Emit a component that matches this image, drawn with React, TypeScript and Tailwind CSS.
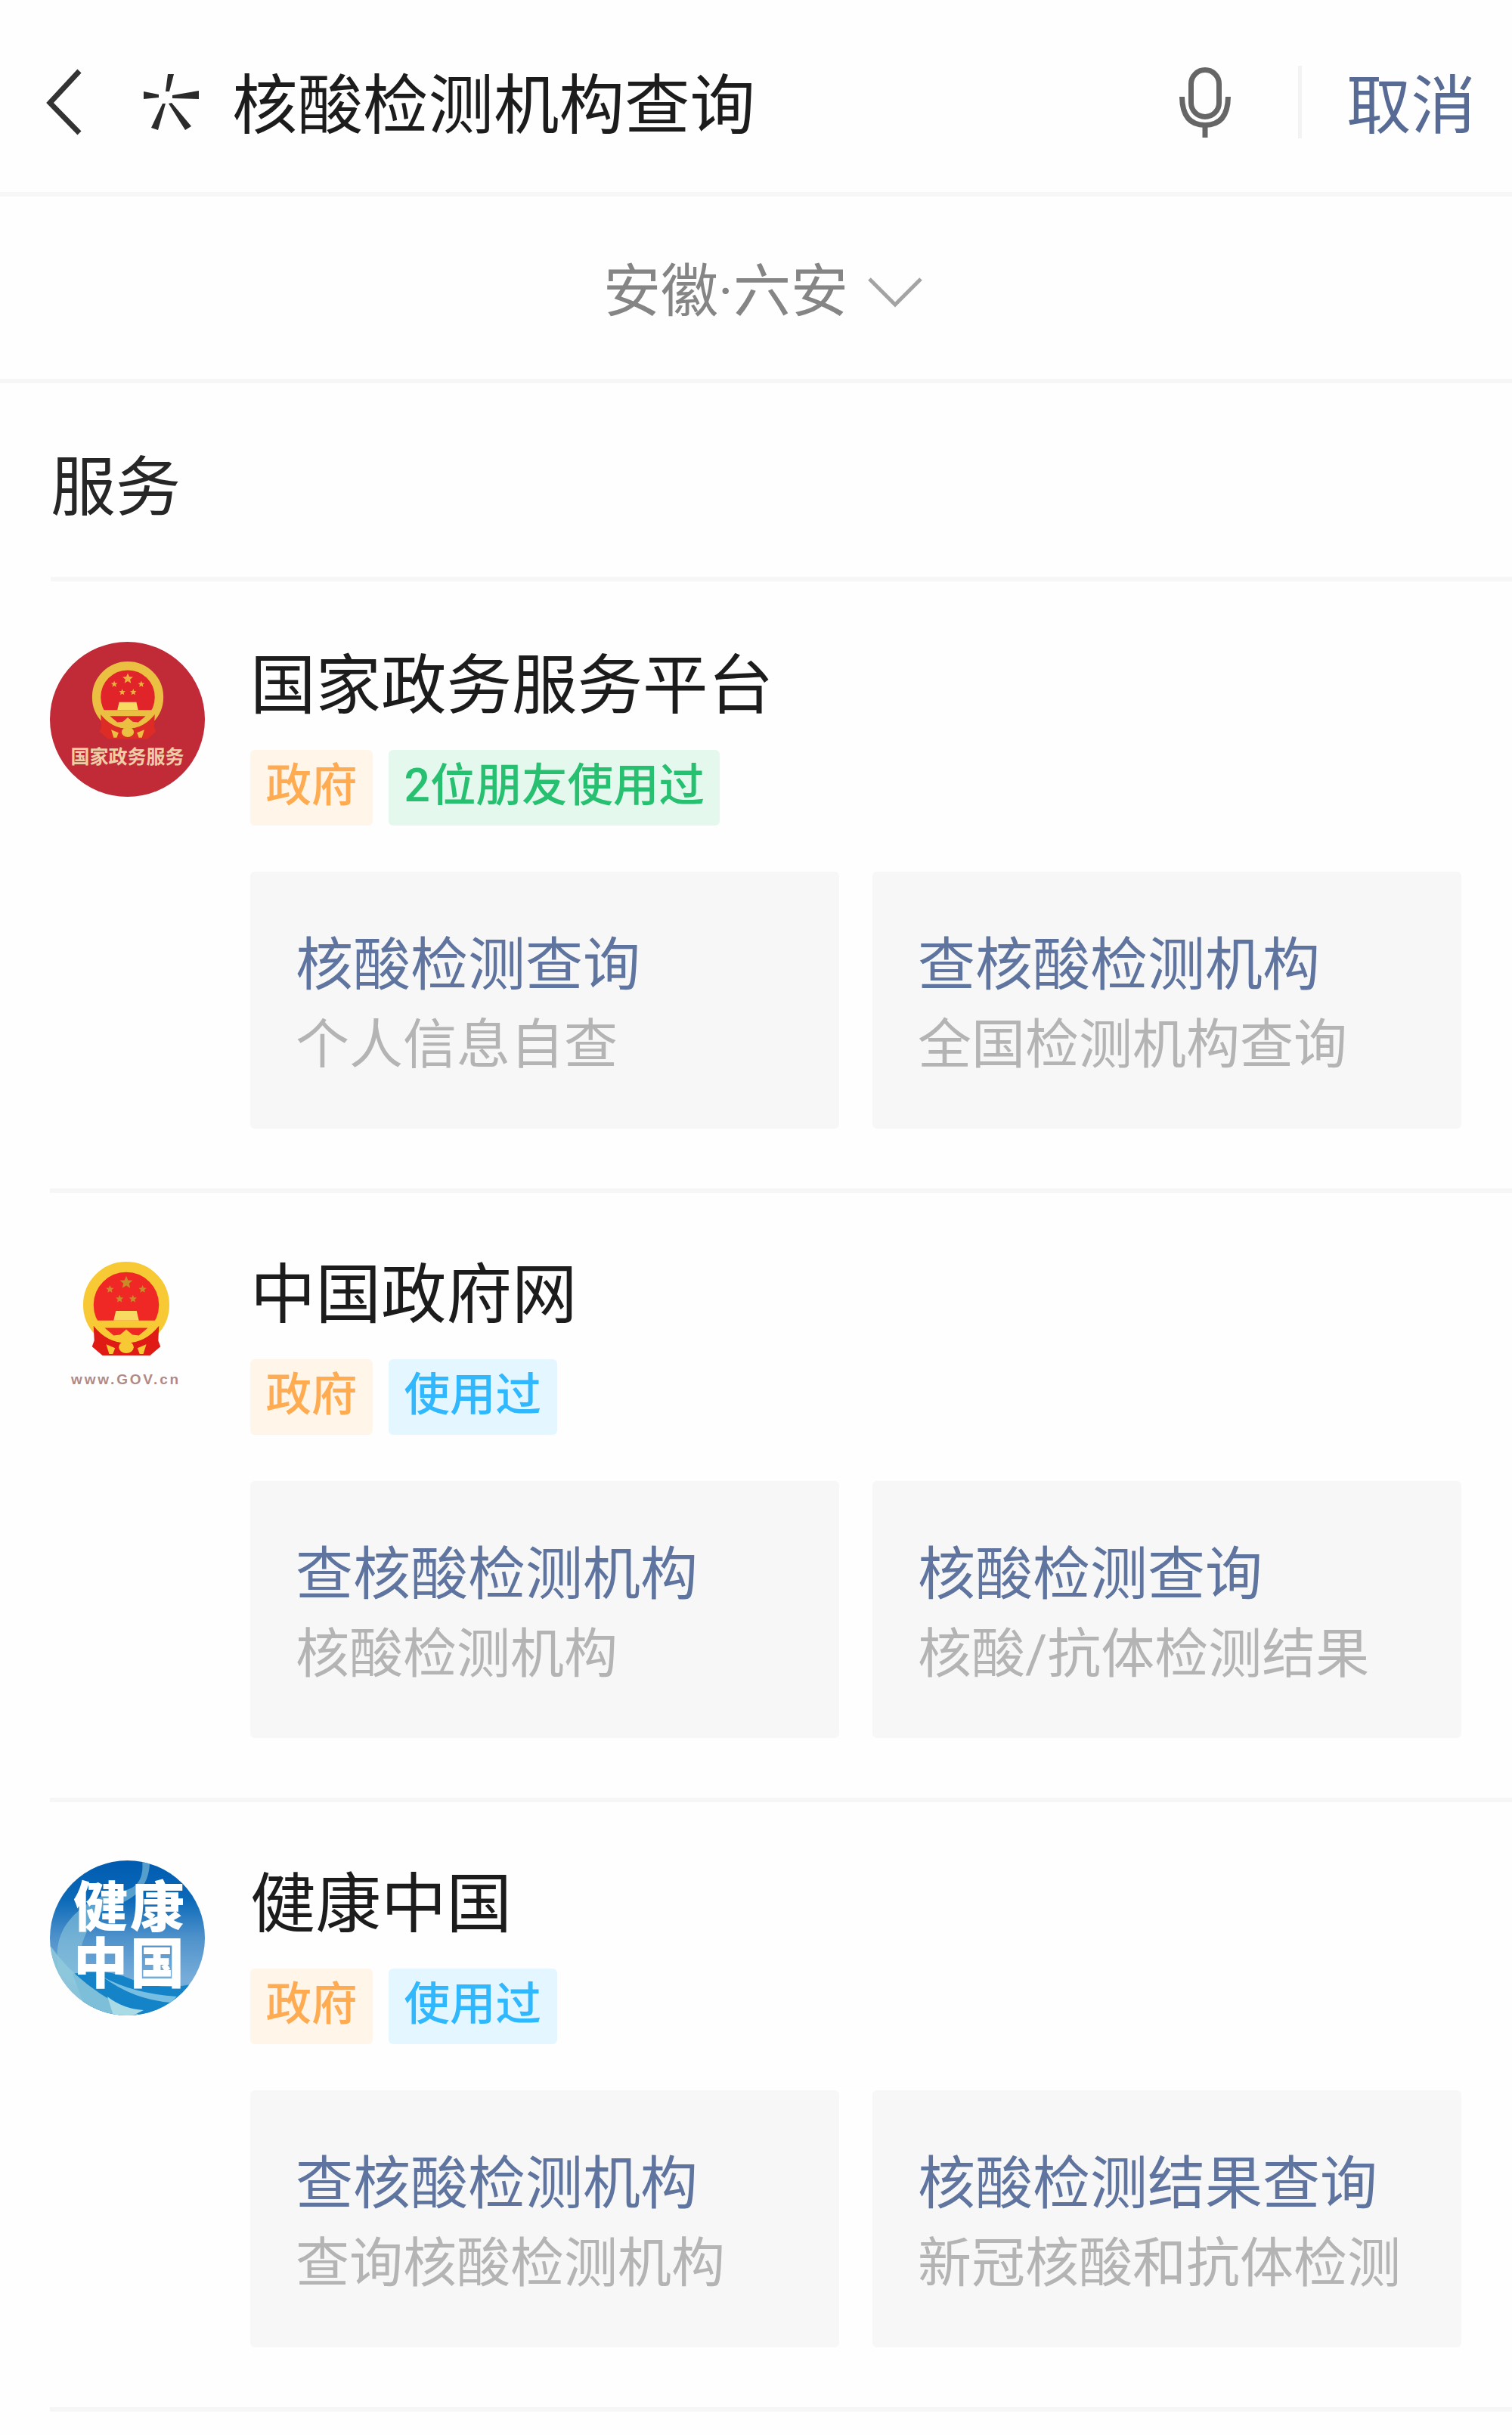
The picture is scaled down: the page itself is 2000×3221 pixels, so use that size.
import React from 'react';

type Tone = 'orange' | 'green' | 'blue';
type Tag = { label: string; tone: Tone };
type Entry = { title: string; note: string };
type Service = { name: string; logo: React.ReactNode; tags: Tag[]; entries: Entry[] };

const toneClass: Record<Tone, string> = {
  orange: 'bg-[#fff5e9] text-[#ffab52]',
  green: 'bg-[#e5f8ed] text-[#26c070]',
  blue: 'bg-[#e4f6ff] text-[#30b8ff]',
};

const star = (cx: number, cy: number, r: number) =>
  Array.from({ length: 10 }, (_, i) => {
    const a = (Math.PI / 5) * i - Math.PI / 2;
    const d = i % 2 ? r * 0.45 : r;
    return `${cx + d * Math.cos(a)},${cy + d * Math.sin(a)}`;
  }).join(' ');

/* National emblem in a 120 x 128 box */
function Emblem({ ring, field, ribbon, stars }: { ring: string; field: string; ribbon: string; stars: string }) {
  return (
    <>
      <circle cx="60" cy="58" r="51" fill={field} stroke={ring} strokeWidth="14" />
      <path d="M16 79 H104 L99 89 H21 Z" fill={ring} />
      <path d="M46 66 H74 L77 79 H43 Z" fill="#f8dc62" />
      <path d="M16 86 Q34 109 60 109 Q86 109 104 86 L103 106 L106 114 L92 126 H28 L14 114 L17 106 Z" fill={ribbon} />
      <path d="M19 87 H101 Q84 109 60 109 Q36 109 19 87 Z" fill={ring} />
      <path d="M31 89 H89 L77 99 L68 98 L60 91 L52 98 L43 99 Z" fill={field} />
      <path d="M52 98 L60 92 L68 98 L64 101 H56 Z" fill={ring} />
      <ellipse cx="60" cy="115" rx="10" ry="8" fill={ring} />
      <path d="M33 111 L45 116 L42 124 L37 124 Z M87 111 L75 116 L78 124 L83 124 Z" fill={ring} />
      <polygon points={star(60, 28, 9)} fill={stars} />
      <polygon points={star(38, 37, 5.5)} fill={stars} />
      <polygon points={star(82, 37, 5.5)} fill={stars} />
      <polygon points={star(51, 50, 5.5)} fill={stars} />
      <polygon points={star(69, 50, 5.5)} fill={stars} />
    </>
  );
}

function PlatformLogo() {
  return (
    <div className="flex h-[205px] w-[205px] flex-col items-center rounded-full bg-[#c02b37] pt-[26px]">
      <svg width="98" height="104" viewBox="0 0 120 128">
        <Emblem ring="#eabf42" field="#e0242a" ribbon="#dd2b26" stars="#ecb040" />
      </svg>
      <span className="mt-[8px] whitespace-nowrap text-[25px] font-bold leading-[30px] text-[#edcda5]">国家政务服务</span>
    </div>
  );
}

function GovLogo() {
  return (
    <div className="flex h-[205px] w-[201px] flex-col items-center pt-[14px]">
      <svg width="118" height="126" viewBox="0 0 120 128">
        <Emblem ring="#f6c935" field="#f02825" ribbon="#e01a14" stars="#c98a2a" />
      </svg>
      <span className="mt-[18px] whitespace-nowrap font-['Liberation_Sans'] text-[19px] font-bold leading-[24px] tracking-[2.8px] text-[#b08a86]">
        www.GOV.cn
      </span>
    </div>
  );
}

function HealthLogo() {
  return (
    <div className="relative h-[205px] w-[205px] overflow-hidden rounded-full">
      <svg width="205" height="205" viewBox="0 0 205 205" className="absolute inset-0">
        <defs>
          <linearGradient id="sky" x1="0" y1="0" x2="0" y2="1">
            <stop offset="0" stopColor="#005bb0" />
            <stop offset="0.25" stopColor="#0b69b8" />
            <stop offset="0.5" stopColor="#4f92cb" />
            <stop offset="0.78" stopColor="#79aeda" />
            <stop offset="1" stopColor="#3a9ed0" />
          </linearGradient>
        </defs>
        <rect width="205" height="205" fill="url(#sky)" />
        <path d="M122 0 Q126 34 98 40 Q50 46 22 84 Q4 110 12 150 L40 170 Q30 96 76 62 Q130 50 132 4 Z" fill="#8cc6dc" opacity="0.6" />
        <path d="M30 150 Q70 140 110 158 Q160 176 205 158 V205 H50 Z" fill="#1483c8" />
        <path d="M0 112 Q40 170 120 205 H40 L0 180 Z" fill="#8fc9dc" opacity="0.85" />
        <path d="M70 154 Q110 176 168 180 L160 188 Q110 184 70 154 Z" fill="#76bfe2" />
        <path d="M76 180 Q96 196 124 198 L110 205 H84 Z" fill="#a9dbe6" />
      </svg>
      <div className="relative ml-[31px] mt-[25px] w-[154px] break-all text-[72px] font-black leading-[75px] tracking-[3px] text-white">
        健康中国
      </div>
    </div>
  );
}

const services: Service[] = [
  {
    name: '国家政务服务平台',
    logo: <PlatformLogo />,
    tags: [
      { label: '政府', tone: 'orange' },
      { label: '2位朋友使用过', tone: 'green' },
    ],
    entries: [
      { title: '核酸检测查询', note: '个人信息自查' },
      { title: '查核酸检测机构', note: '全国检测机构查询' },
    ],
  },
  {
    name: '中国政府网',
    logo: <GovLogo />,
    tags: [
      { label: '政府', tone: 'orange' },
      { label: '使用过', tone: 'blue' },
    ],
    entries: [
      { title: '查核酸检测机构', note: '核酸检测机构' },
      { title: '核酸检测查询', note: '核酸/抗体检测结果' },
    ],
  },
  {
    name: '健康中国',
    logo: <HealthLogo />,
    tags: [
      { label: '政府', tone: 'orange' },
      { label: '使用过', tone: 'blue' },
    ],
    entries: [
      { title: '查核酸检测机构', note: '查询核酸检测机构' },
      { title: '核酸检测结果查询', note: '新冠核酸和抗体检测' },
    ],
  },
];

function SearchBar() {
  return (
    <header className="flex h-[260px] items-start border-b-[6px] border-[#f7f7f7] pl-[60px] pr-[48px] pt-[85px]">
      <svg className="mt-[5px] shrink-0" width="50" height="90" viewBox="0 0 50 90" fill="none" stroke="#333" strokeWidth="7">
        <path d="M45 4 L6 46 L45 86" />
      </svg>
      <svg className="ml-[78px] mt-[10px] shrink-0" width="78" height="80" viewBox="0 0 78 80" fill="#2b2b2b">
        <path d="M34 3 L42 3 L36 26 L31 26 Z" />
        <path d="M2 26 L22 30 L22 34 L2 36 Z" />
        <path d="M40 31 L75 25 L75 36 L40 35 Z" />
        <path d="M27 42 L31 42 L21 77 L12 74 Z" />
        <path d="M35 42 L39 41 L65 72 L57 77 Z" />
      </svg>
      <h1 className="ml-[41px] whitespace-nowrap text-[86.500px] leading-[112px] text-[#1c1c1c]">核酸检测机构查询</h1>
      <div className="ml-auto flex items-start">
        <svg className="mt-[3px]" width="70" height="95" viewBox="0 0 70 95" fill="none" stroke="#666" strokeWidth="7">
          <rect x="16.500" y="4.500" width="37" height="62" rx="18.500" />
          <path d="M4.500 40 Q5 77.500 35 77.500 Q65 77.500 65.500 40" />
          <path d="M35 77 V94" />
        </svg>
        <div className="ml-[88px] mt-[2px] h-[96px] w-[5px] bg-[#f3f3f3]" />
        <span className="ml-[59px] whitespace-nowrap text-[85.500px] leading-[112px] text-[#576b95]">取消</span>
      </div>
    </header>
  );
}

function LocationPicker() {
  return (
    <div className="flex h-[247px] justify-center border-b-[6px] border-[#f6f6f6] pl-[20px] pt-[76px]">
      <span className="whitespace-nowrap text-[76px] leading-[100px] text-[#858585]">安徽·六安</span>
      <svg className="ml-[24px] mt-[27px]" width="76" height="50" viewBox="0 0 76 50" fill="none" stroke="#a3a3a3" strokeWidth="5">
        <path d="M4 6 L38 40 L72 6" />
      </svg>
    </div>
  );
}

function ServiceItem({ service }: { service: Service }) {
  return (
    <article className="ml-[66px] flex h-[806px] border-b-[6px] border-[#f6f6f6] pr-[67px] pt-[77px]">
      <div className="w-[265px] shrink-0">{service.logo}</div>
      <div className="flex-1">
        <h3 className="h-[112px] whitespace-nowrap pt-[3px] text-[86.500px] leading-[112px] text-[#1c1c1c]">{service.name}</h3>
        <div className="mt-[31px] flex gap-[21px]">
          {service.tags.map((tag) => (
            <span
              key={tag.label}
              className={`h-[100px] whitespace-nowrap rounded-[6px] px-[20.500px] text-[60.500px] font-medium leading-[95px] ${toneClass[tag.tone]}`}
            >
              {tag.label}
            </span>
          ))}
        </div>
        <div className="mt-[61px] grid grid-cols-2 gap-[44px]">
          {service.entries.map((entry) => (
            <div key={entry.title} className="h-[340px] whitespace-nowrap rounded-[6px] bg-[#f7f7f7] pl-[60px] pt-[70px]">
              <div className="text-[76px] leading-[108px] text-[#5f759f]">{entry.title}</div>
              <div className="text-[71px] leading-[102px] text-[#b4b4b4]">{entry.note}</div>
            </div>
          ))}
        </div>
      </div>
    </article>
  );
}

export default function App() {
  return (
    <main className="h-[3221px] w-[2000px] overflow-hidden bg-[#fefefe] font-[Roboto,'Noto_Sans_CJK_SC',sans-serif]">
      <SearchBar />
      <LocationPicker />
      <section>
        <h2 className="mb-[3px] ml-[67px] h-[262px] border-b-[6px] border-[#f6f6f6] pt-[83px] text-[86px] leading-[112px] text-[#262626]">服务</h2>
        {services.map((service) => (
          <ServiceItem key={service.name} service={service} />
        ))}
      </section>
    </main>
  );
}
